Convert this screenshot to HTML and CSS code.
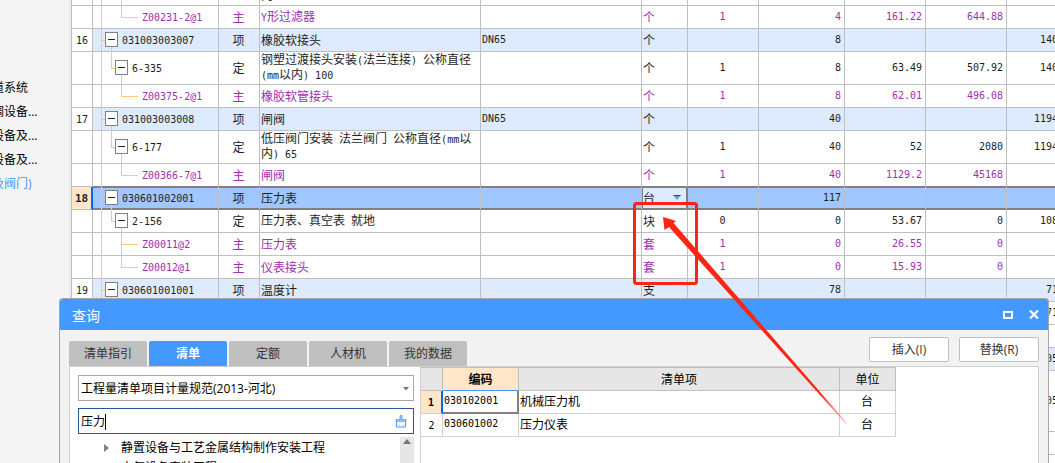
FILE: index.html
```html
<!DOCTYPE html>
<html lang="zh-CN">
<head>
<meta charset="utf-8">
<title>查询</title>
<link rel="stylesheet" href="styles.css">
</head>
<body>
<div class="app">
  <nav class="sidebar">
    <ul>
      <li>道系统</li>
      <li>调设备...</li>
      <li>设备及...</li>
      <li>设备及...</li>
      <li class="current">及阀门)</li>
    </ul>
  </nav>
  <main class="sheet">
    <table class="bill">
      <colgroup>
        <col class="c-no"><col class="c-code"><col class="c-kind"><col class="c-name"><col class="c-spec"><col class="c-unit"><col class="c-rate"><col class="c-qty"><col class="c-price"><col class="c-price"><col class="c-last">
      </colgroup>
      <tbody>
        <tr class="tall"><th></th><td><div class="tree"><i class="root"></i><i class="skip"></i><i class="pass"></i></div></td><td></td><td class="name"><br>内</td><td></td><td></td><td></td><td></td><td></td><td></td><td></td></tr>
        <tr class="main-mat"><th></th><td><div class="tree"><i class="root"></i><i class="skip"></i><i class="leaf end"></i>Z00231-2@1</div></td><td class="kind">主</td><td class="name"><span class="n">Y</span>形过滤器</td><td></td><td class="name">个</td><td class="mid">1</td><td class="num">4</td><td class="num">161.22</td><td class="num">644.88</td><td></td></tr>
        <tr class="item"><th>16</th><td><div class="tree"><i class="root tee"></i><button class="box" aria-label="折叠"></button>031003003007</div></td><td class="kind">项</td><td class="name">橡胶软接头</td><td>DN65</td><td class="name">个</td><td></td><td class="num">8</td><td></td><td></td><td class="num">140</td></tr>
        <tr class="tall"><th></th><td><div class="tree"><i class="root"></i><i class="sub"></i><button class="box" aria-label="折叠"></button>6-335</div></td><td class="kind">定</td><td class="name">钢塑过渡接头安装<span class="n">(</span>法兰连接<span class="n">) </span>公称直径<br><span class="n">(mm</span>以内<span class="n">) 100</span></td><td></td><td class="name">个</td><td class="mid">1</td><td class="num">8</td><td class="num">63.49</td><td class="num">507.92</td><td class="num">140</td></tr>
        <tr class="main-mat"><th></th><td><div class="tree"><i class="root"></i><i class="skip"></i><i class="leaf end"></i>Z00375-2@1</div></td><td class="kind">主</td><td class="name">橡胶软管接头</td><td></td><td class="name">个</td><td class="mid">1</td><td class="num">8</td><td class="num">62.01</td><td class="num">496.08</td><td></td></tr>
        <tr class="item"><th>17</th><td><div class="tree"><i class="root tee"></i><button class="box" aria-label="折叠"></button>031003003008</div></td><td class="kind">项</td><td class="name">闸阀</td><td>DN65</td><td class="name">个</td><td></td><td class="num">40</td><td></td><td></td><td class="num">1194</td></tr>
        <tr class="tall"><th></th><td><div class="tree"><i class="root"></i><i class="sub"></i><button class="box" aria-label="折叠"></button>6-177</div></td><td class="kind">定</td><td class="name">低压阀门安装<span class="n"> </span>法兰阀门<span class="n"> </span>公称直径<span class="n">(mm</span>以<br>内<span class="n">) 65</span></td><td></td><td class="name">个</td><td class="mid">1</td><td class="num">40</td><td class="num">52</td><td class="num">2080</td><td class="num">1194</td></tr>
        <tr class="main-mat before"><th></th><td><div class="tree"><i class="root"></i><i class="skip"></i><i class="leaf end"></i>Z00366-7@1</div></td><td class="kind">主</td><td class="name">闸阀</td><td></td><td class="name">个</td><td class="mid">1</td><td class="num">40</td><td class="num">1129.2</td><td class="num">45168</td><td></td></tr>
        <tr class="selected"><th>18</th><td><div class="tree"><i class="root tee"></i><button class="box" aria-label="折叠"></button>030601002001</div></td><td class="kind">项</td><td class="name">压力表</td><td></td><td class="name edit"><div class="pick"><select aria-label="单位"><option>台</option></select><svg width="8" height="5" viewBox="0 0 8 5"><path d="M0 0h8L4 5z" fill="#5aa5d8"/><path d="M0 0h8L7 1H1z" fill="#1f4f7a"/></svg></div></td><td></td><td class="num">117</td><td></td><td></td><td></td></tr>
        <tr><th></th><td><div class="tree"><i class="root"></i><i class="sub"></i><button class="box" aria-label="折叠"></button>2-156</div></td><td class="kind">定</td><td class="name">压力表、真空表<span class="n"> </span>就地</td><td></td><td class="name">块</td><td class="mid">0</td><td class="num">0</td><td class="num">53.67</td><td class="num">0</td><td class="num">108</td></tr>
        <tr class="main-mat"><th></th><td><div class="tree"><i class="root"></i><i class="skip"></i><i class="leaf"></i>Z00011@2</div></td><td class="kind">主</td><td class="name">压力表</td><td></td><td class="name">套</td><td class="mid">1</td><td class="num">0</td><td class="num">26.55</td><td class="num">0</td><td></td></tr>
        <tr class="main-mat"><th></th><td><div class="tree"><i class="root"></i><i class="skip"></i><i class="leaf end"></i>Z00012@1</div></td><td class="kind">主</td><td class="name">仪表接头</td><td></td><td class="name">套</td><td class="mid">1</td><td class="num">0</td><td class="num">15.93</td><td class="num">0</td><td></td></tr>
        <tr class="item"><th>19</th><td><div class="tree"><i class="root tee"></i><button class="box" aria-label="折叠"></button>030601001001</div></td><td class="kind">项</td><td class="name">温度计</td><td></td><td class="name">支</td><td></td><td class="num">78</td><td></td><td></td><td class="num">71</td></tr>
        <tr><th></th><td></td><td></td><td></td><td></td><td></td><td></td><td></td><td></td><td></td><td class="num">71</td></tr>
        <tr><th></th><td></td><td></td><td></td><td></td><td></td><td></td><td></td><td></td><td></td><td></td></tr>
        <tr class="item"><th></th><td></td><td></td><td></td><td></td><td></td><td></td><td></td><td></td><td></td><td class="num">05</td></tr>
        <tr class="taller"><th></th><td></td><td></td><td></td><td></td><td></td><td></td><td></td><td></td><td></td><td class="num">05</td></tr>
        <tr><th></th><td></td><td></td><td></td><td></td><td></td><td></td><td></td><td></td><td></td><td></td></tr>
        <tr><th></th><td></td><td></td><td></td><td></td><td></td><td></td><td></td><td></td><td></td><td></td></tr>
      </tbody>
    </table>
  </main>
</div>

<section class="dialog" role="dialog" aria-labelledby="dlg-title">
  <header class="titlebar">
    <h1 id="dlg-title">查询</h1>
    <button class="winbtn" aria-label="最大化"><svg width="10" height="8" viewBox="0 0 10 8"><path d="M1 1h8v6H1z" fill="none" stroke="#fff" stroke-width="2"/></svg></button>
    <button class="winbtn" aria-label="关闭"><svg width="10" height="9" viewBox="0 0 10 9"><path d="M1 .5l8 8M9 .5l-8 8" stroke="#fff" stroke-width="2.2"/></svg></button>
  </header>
  <div class="toolbar">
    <div class="tabs" role="tablist">
      <button role="tab">清单指引</button>
      <button role="tab" aria-selected="true" class="active">清单</button>
      <button role="tab">定额</button>
      <button role="tab">人材机</button>
      <button role="tab">我的数据</button>
    </div>
    <div class="actions">
      <button>插入(I)</button>
      <button>替换(R)</button>
    </div>
  </div>
  <div class="panel">
    <div class="left">
      <div class="field">
        <select aria-label="规范"><option>工程量清单项目计量规范(2013-河北)</option></select>
        <svg class="caret" width="6" height="4" viewBox="0 0 6 4"><path d="M0 0h6L3 3.5z" fill="#777"/></svg>
      </div>
      <div class="field search">
        <input type="text" aria-label="搜索" value="压力">
        <i class="cursor"></i>
        <button aria-label="清除"><svg width="12" height="13" viewBox="0 0 12 13"><path d="M5 .5h2v4h4v2.500H1V4.500h4z" fill="#8cc0ff" stroke="#6fb0ff"/><path d="M1.500 7v5h9V7" fill="#fff" stroke="#4a9bff"/><path d="M4 12V9.500M8 12V9.500" fill="none" stroke="#8cc0ff"/></svg></button>
      </div>
      <div class="catalog">
        <ul>
          <li><svg width="5" height="8" viewBox="0 0 5 8"><path d="M0 0l5 4-5 4z" fill="#808080"/></svg>静置设备与工艺金属结构制作安装工程</li>
          <li><svg width="5" height="8" viewBox="0 0 5 8"><path d="M0 0l5 4-5 4z" fill="#808080"/></svg>电气设备安装工程</li>
        </ul>
        <div class="scroll"><svg width="8" height="5" viewBox="0 0 8 5"><path d="M0 5h8L4 0z" fill="#73737b"/></svg></div>
      </div>
    </div>
    <div class="right">
      <table class="results">
        <colgroup><col class="r-no"><col class="r-code"><col class="r-name"><col class="r-unit"></colgroup>
        <thead><tr><th></th><th class="on">编码</th><th>清单项</th><th>单位</th></tr></thead>
        <tbody>
          <tr><th class="on">1</th><td class="focus">030102001</td><td class="name">机械压力机</td><td class="kind">台</td></tr>
          <tr><th>2</th><td>030601002</td><td class="name">压力仪表</td><td class="kind">台</td></tr>
        </tbody>
      </table>
    </div>
  </div>
</section>

<svg class="markup" width="240" height="240" viewBox="620 190 240 240" aria-hidden="true">
  <defs>
    <linearGradient id="fade" gradientUnits="userSpaceOnUse" x1="663" y1="217" x2="847" y2="424">
      <stop offset="0.85" stop-color="#ff2413"/>
      <stop offset="1" stop-color="#ff2413" stop-opacity="0.2"/>
    </linearGradient>
  </defs>
  <rect x="634.500" y="203.500" width="62" height="80" rx="2" fill="none" stroke="#ff2413" stroke-width="3"/>
  <path d="M663 217L676 221L673.500 223L847 423L846 424L669 227L664.500 230z" fill="url(#fade)"/>
</svg>
</body>
</html>
```
FILE: styles.css
```css
* { box-sizing: border-box; }

body {
  margin: 0;
  height: 100vh;
  overflow: hidden;
  position: relative;
  background: #fff;
  color: #1e1e1e;
  font: 12px/16px "Open Sans", "Noto Sans CJK SC", sans-serif;
}

button, select, input {
  margin: 0;
  padding: 0;
  border: 0;
  background: none;
  color: inherit;
  font: inherit;
  appearance: none;
  outline: 0;
}

ul { margin: 0; padding: 0; list-style: none; }

svg { display: block; flex: none; }

.app { display: flex; height: 100%; }

/* Sidebar */
.sidebar {
  flex: none;
  width: 71px;
  padding-top: 76px;
  overflow: hidden;
  background: #f4f4f4;
  border-right: 2px solid #ebebeb;
  color: #000;
}

.sidebar li {
  margin-left: -8px;
  line-height: 24px;
  white-space: nowrap;
}

.sidebar .current { color: #4499ff; }

/* Bill sheet */
.sheet { flex: 1; min-width: 0; overflow: hidden; }

table { border-collapse: separate; border-spacing: 0; table-layout: fixed; }

.bill {
  width: 991px;
  margin-top: -27px;
  border-left: 1px solid #bfbfbf;
}

.c-no { width: 21px; }
.c-code { width: 126px; }
.c-kind { width: 41px; }
.c-name { width: 221px; }
.c-spec { width: 161px; }
.c-unit { width: 46px; }
.c-rate { width: 71px; }
.c-qty { width: 86px; }
.c-price { width: 81px; }
.c-last { width: 55px; }

.bill tr { height: 23px; }
.bill .tall { height: 33px; }
.bill .taller { height: 61px; }

.bill th, .bill td {
  padding: 0 2px 2px 1px;
  border-right: 1px solid #bfbfbf;
  border-bottom: 1px solid #bfbfbf;
  font: 10px/13px "DejaVu Sans Mono", monospace;
  text-align: left;
  white-space: nowrap;
}

.bill th { padding: 0; text-align: center; }
.bill td:nth-child(2) { padding: 0; }

.bill td.name, .bill td.kind,
.results td.name, .results td.kind {
  font: 12px/13px "Noto Sans CJK SC", sans-serif;
}

.bill td.kind, .bill td.mid, .results td.kind { text-align: center; }
.bill td.num { padding-right: 3px; text-align: right; }

.n {
  font: 10px/12px "DejaVu Sans Mono", monospace;
  white-space: pre;
}

.main-mat { color: #a030b0; }
.item td { background: #deeafe; }

.before td { border-bottom-color: #808080; }

.selected td {
  background: #a0c8ff;
  border-bottom-color: #808080;
  box-shadow: inset 0 1px #808080, inset 0 -1px #808080;
}

.bill .selected th {
  background: #ffe6c8;
  border-right: 2px solid #0066ff;
  font-size: 11px;
  font-weight: bold;
}

.selected td.edit {
  padding: 0 0 2px;
  background: #deeafe;
  border-right-color: #808080;
  box-shadow: inset 1px 1px #808080, inset -1px -1px #808080;
}

.pick {
  display: grid;
  grid-template-columns: 1fr auto;
  align-items: center;
  padding: 0 6px 0 1px;
}

.pick select { grid-area: 1 / 1 / 2 / 3; width: 100%; }
.pick svg { grid-area: 1 / 2; pointer-events: none; }

/* Outline tree */
.tree {
  --line: linear-gradient(#ffc878, #ffc878);
  display: flex;
  align-items: center;
  height: 23px;
  margin-bottom: -1px;
  line-height: 11px;
}

.tall .tree { height: 33px; }

.tree i { flex: none; align-self: stretch; background-repeat: no-repeat; }

.root {
  width: 12px;
  background-image: var(--line);
  background-size: 1px 100%;
  background-position: 8px 0;
}

.root.tee {
  background-image: var(--line), var(--line);
  background-size: 1px 100%, 4px 1px;
  background-position: 8px 0, 8px 50%;
}

.skip { width: 10px; }

.sub {
  width: 10px;
  background-image: var(--line), var(--line);
  background-size: 1px 50%, 4px 1px;
  background-position: 6px 0, 6px 50%;
}

.pass {
  width: 23px;
  background-image: var(--line);
  background-size: 1px 100%;
  background-position: 6px 0;
}

.leaf {
  width: 23px;
  margin-right: 4px;
  background-image: var(--line), var(--line);
  background-size: 1px 100%, 17px 1px;
  background-position: 6px 0, 6px 50%;
}

.leaf.end { background-size: 1px 50%, 17px 1px; }

.box {
  flex: none;
  align-self: stretch;
  display: flex;
  align-items: center;
  width: 13px;
  margin-right: 4px;
  padding-bottom: 2px;
  background: var(--line) 6px 100% / 1px 50% no-repeat;
}

.box::before {
  content: "";
  width: 13px;
  height: 13px;
  border: 1px solid #808080;
  background: linear-gradient(#222, #222) center / 7px 1px no-repeat #fff;
}

/* Query dialog */
.dialog {
  position: absolute;
  inset: 298px 6px 0 59px;
  display: flex;
  flex-direction: column;
  overflow: hidden;
  border: 1px solid #a6a6a6;
  border-bottom: 0;
  border-radius: 4px 4px 0 0;
  background: #f2f2f2;
}

.titlebar {
  display: flex;
  flex: none;
  align-items: center;
  height: 31px;
  gap: 16px;
  padding: 0 9px 0 12px;
  background: #4499ff;
  color: #fff;
}

.titlebar h1 {
  flex: 1;
  margin: 0;
  padding-top: 2px;
  font-size: 14px;
  font-weight: normal;
  line-height: 20px;
}

.toolbar {
  display: flex;
  flex: none;
  align-items: flex-end;
  justify-content: space-between;
  height: 36px;
  padding: 0 9px;
}

.tabs { display: flex; gap: 2px; }

.tabs button {
  width: 78px;
  height: 25px;
  padding-top: 1px;
  border-radius: 2px 2px 0 0;
  background: #bfbfbf;
  color: #333;
}

.tabs .active { background: #4499ff; color: #fff; font-weight: bold; }

.actions { display: flex; gap: 10px; padding-bottom: 4px; }

.actions button {
  width: 80px;
  height: 25px;
  border: 1px solid #bfbfbf;
  border-radius: 2px;
  background: #fff;
  color: #333;
}

.panel {
  flex: 1;
  display: flex;
  min-height: 0;
  margin: 0 9px;
  border: 1px solid #d0d0d0;
  border-bottom: 0;
  background: #fff;
  color: #000;
}

.left {
  display: flex;
  flex: none;
  flex-direction: column;
  width: 351px;
  padding: 8px 6px 0 8px;
  border-right: 1px solid #d0d0d0;
}

.field {
  display: flex;
  flex: none;
  align-items: center;
  height: 26px;
  margin-bottom: 7px;
  padding: 1px 4px 0 2px;
  border: 1px solid #a6a6a6;
}

.field select { flex: 1; min-width: 0; }

.search { margin-bottom: 3px; border-color: #2a579a; padding-right: 6px; }
.search input { width: 24px; }
.cursor { width: 1px; height: 16px; background: #000; }
.search button { margin-left: auto; }

.catalog { display: flex; flex: 1; min-height: 0; overflow: hidden; }
.catalog ul { flex: 1; padding-top: 1px; }

.catalog li {
  display: flex;
  align-items: center;
  gap: 12px;
  height: 20px;
  padding-left: 26px;
}

.scroll { width: 14px; padding: 2px 3px; background: #e6e6e6; }

.right { flex: 1; min-width: 0; overflow: hidden; }

.results { width: 475px; border-top: 1px solid #bfbfbf; }

.r-no { width: 22px; }
.r-code { width: 76px; }
.r-name { width: 321px; }
.r-unit { width: 56px; }

.results tr { height: 23px; }

.results th, .results td {
  padding: 0 2px 3px 1px;
  border-right: 1px solid #d0d0d0;
  border-bottom: 1px solid #d0d0d0;
  font: 10px/13px "DejaVu Sans Mono", monospace;
  text-align: left;
}

.results th { padding: 0; text-align: center; }

.results thead th {
  padding-bottom: 2px;
  border-color: #bfbfbf;
  background: #e6e6e6;
  font: 12px/13px "Noto Sans CJK SC", sans-serif;
}

.results thead th.on {
  border-bottom-color: #4499ff;
  background: #ffe6c8;
  font-weight: bold;
}

.results tbody th.on {
  border-right: 2px solid #0066ff;
  background: #ffe6c8;
  font-weight: bold;
}

.results td.focus {
  border-color: #808080;
  box-shadow: inset -1px -1px #808080;
}

/* Red callout drawn over the sheet and the dialog */
.markup {
  position: absolute;
  left: 620px;
  top: 190px;
  pointer-events: none;
}
```
